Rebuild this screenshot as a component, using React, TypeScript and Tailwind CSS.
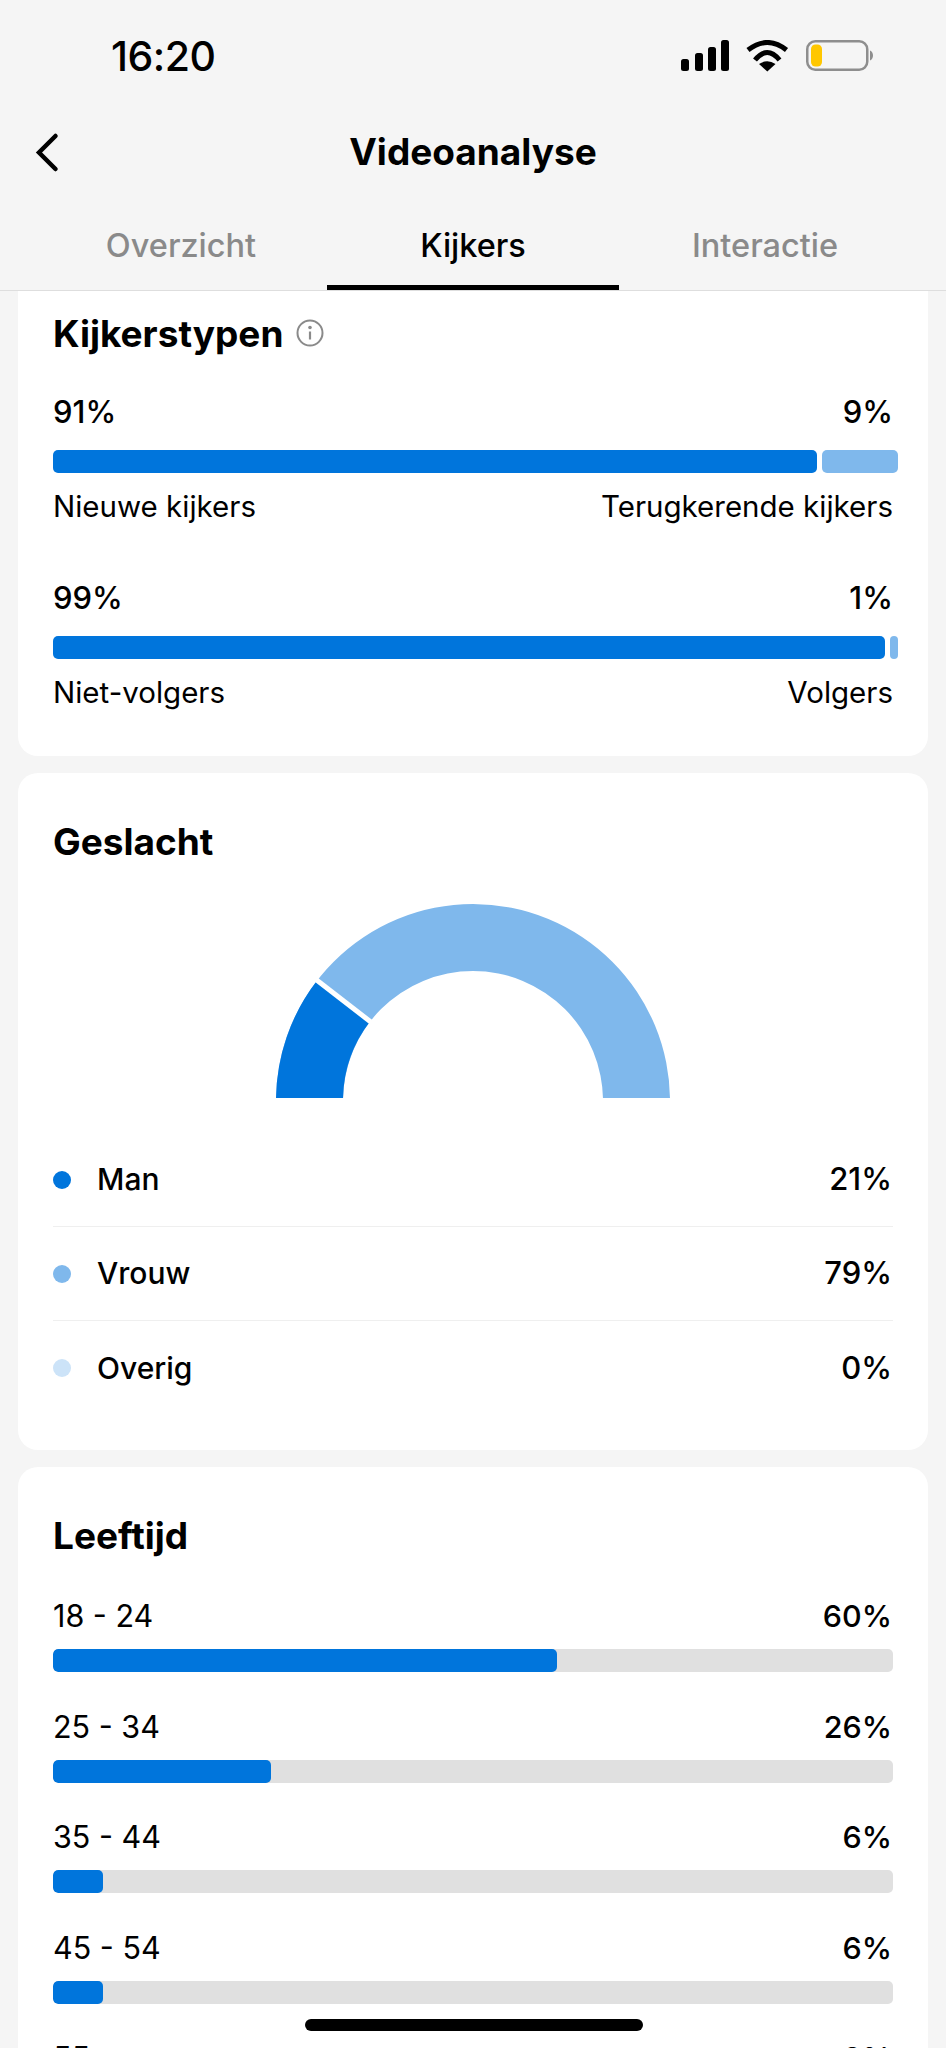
const sans = "font-['Inter',sans-serif]"

const typen = [
  { left: '91%', right: '9%', leftLabel: 'Nieuwe kijkers', rightLabel: 'Terugkerende kijkers', w: 'w-[764px]' },
  { left: '99%', right: '1%', leftLabel: 'Niet-volgers', rightLabel: 'Volgers', w: 'w-[832px]' },
]

const geslacht = [
  { label: 'Man', pct: '21%', dot: 'bg-[#0075DC]' },
  { label: 'Vrouw', pct: '79%', dot: 'bg-[#7FB8EC]' },
  { label: 'Overig', pct: '0%', dot: 'bg-[#CCE3F8]' },
]

const leeftijd = [
  { label: '18 - 24', pct: 60 },
  { label: '25 - 34', pct: 26 },
  { label: '35 - 44', pct: 6 },
  { label: '45 - 54', pct: 6 },
  { label: '55+', pct: 2 },
]

function StatusBar() {
  return (
    <div className="flex items-center justify-between h-[112px] pl-[111px] pr-[71px]">
      <span className="text-[41px] font-medium leading-none text-black tracking-[-0.5px]">16:20</span>
      <svg width="194" height="32" viewBox="0 0 194 32" fill="none">
        <rect x="0" y="19" width="8" height="12" rx="2.500" fill="#000" />
        <rect x="14" y="13" width="8" height="18" rx="2.500" fill="#000" />
        <rect x="27" y="7" width="8" height="24" rx="2.500" fill="#000" />
        <rect x="40" y="0" width="8" height="31" rx="2.500" fill="#000" />
        <path d="M67 10 Q86.300 -5 105.500 10" stroke="#000" strokeWidth="5" />
        <path d="M74 20 Q86.300 5 98.500 20" stroke="#000" strokeWidth="5" />
        <path d="M78 24 Q86.300 18.500 94.500 24 L86.300 31.500 Z" fill="#000" />
        <rect x="126.250" y="1.250" width="60" height="28.500" rx="8" stroke="#8E8E8E" strokeWidth="2.500" />
        <rect x="130" y="4.500" width="11" height="22" rx="4.500" fill="#FFC700" />
        <path d="M189 10.500 C193 12 193 19 189 20.500 Z" fill="#8E8E8E" />
      </svg>
    </div>
  )
}

function Tab({ label, active }: { label: string; active?: boolean }) {
  return (
    <div
      className={`relative flex-1 flex items-center justify-center h-[78px] pb-[10px] text-[32.5px] font-medium ${
        active ? 'text-black' : 'text-[#8A8A8A]'
      }`}
    >
      {label}
      {active && <div className="absolute left-0 right-0 bottom-0 h-[5px] bg-black" />}
    </div>
  )
}

function Gauge() {
  return (
    <svg width="394" height="195" viewBox="0 0 394 195" className="block">
      <path d="M0 198 A197 197 0 0 1 394 198 L327 198 A130 130 0 0 0 67 198 Z" fill="#7FB8EC" />
      <path d="M0 198 A197 197 0 0 1 41.300 77.300 L94.200 118.300 A130 130 0 0 0 67 198 Z" fill="#0075DC" />
      <line x1="38" y1="75" x2="100" y2="123" stroke="#fff" strokeWidth="5" />
    </svg>
  )
}

export default function App() {
  return (
    <div className={`relative h-[2048px] overflow-hidden bg-[#F5F5F5] text-black ${sans}`}>
      <header className="border-b border-[#DEDEDE]">
        <StatusBar />
        <div className="relative flex items-center justify-center h-[80px] pb-[2px]">
          <svg width="26" height="42" viewBox="0 0 26 42" fill="none" className="absolute left-[35px] top-[20px]">
            <path d="M20.500 4 L4 20.500 L20.500 37" stroke="#000" strokeWidth="4.500" strokeLinecap="round" />
          </svg>
          <h1 className="text-[37px] font-bold leading-none">Videoanalyse</h1>
        </div>
        <div className="flex pt-[20px] px-[35px]">
          <Tab label="Overzicht" />
          <Tab label="Kijkers" active />
          <Tab label="Interactie" />
        </div>
      </header>

      <main className="flex flex-col gap-[17px] px-[18px]">
        <section className="bg-white rounded-b-[20px] h-[465px] px-[35px] pt-[22px]">
          <div className="flex items-center gap-[13px] h-[40px]">
            <h2 className="text-[37px] font-bold leading-none">Kijkerstypen</h2>
            <svg width="28" height="28" viewBox="0 0 28 28" fill="none">
              <circle cx="14" cy="14" r="12.500" stroke="#8A8A8A" strokeWidth="2" />
              <circle cx="14" cy="8.500" r="1.800" fill="#8A8A8A" />
              <path d="M14 12.500 V20.500" stroke="#8A8A8A" strokeWidth="2.200" />
            </svg>
          </div>
          <div className="flex flex-col gap-[48px] mt-[37px]">
            {typen.map((t) => (
              <div key={t.left}>
                <div className="flex justify-between text-[31px] font-medium leading-[44px]">
                  <span>{t.left}</span>
                  <span>{t.right}</span>
                </div>
                <div className="flex gap-[5px] h-[23px] mt-[16px] -mr-[5px]">
                  <div className={`${t.w} shrink-0 rounded-[5px] bg-[#0075DC]`} />
                  <div className="flex-1 rounded-[5px] bg-[#7FB8EC]" />
                </div>
                <div className="flex justify-between text-[29.5px] leading-[44px] mt-[11px]">
                  <span>{t.leftLabel}</span>
                  <span>{t.rightLabel}</span>
                </div>
              </div>
            ))}
          </div>
        </section>

        <section className="bg-white rounded-[20px] h-[677px] px-[35px] pt-[47px]">
          <h2 className="text-[37px] font-bold leading-[44px]">Geslacht</h2>
          <div className="flex justify-center mt-[39px]">
            <Gauge />
          </div>
          <div className="mt-[35px]">
            {geslacht.map((g, i) => (
              <div
                key={g.label}
                className={`flex items-center h-[94px] ${i < 2 ? 'border-b border-[#EFEFEF]' : ''}`}
              >
                <span className={`w-[18px] h-[18px] rounded-full ${g.dot}`} />
                <span className="ml-[26px] text-[30px] font-medium">{g.label}</span>
                <span className="ml-auto pr-[1px] text-[31px] font-medium">{g.pct}</span>
              </div>
            ))}
          </div>
        </section>

        <section className="bg-white rounded-[20px] px-[35px] pt-[47px]">
          <h2 className="text-[37px] font-bold leading-[44px]">Leeftijd</h2>
          <div className="flex flex-col gap-[32.5px] mt-[36px]">
            {leeftijd.map((a) => (
              <div key={a.label}>
                <div className="flex justify-between text-[30.5px] leading-[44px]">
                  <span>{a.label}</span>
                  <span className="font-medium pr-[1px]">{a.pct}%</span>
                </div>
                <div className="h-[23px] mt-[11px] rounded-[5px] bg-[#E0E0E0] overflow-hidden">
                  <div className="h-full rounded-[5px] bg-[#0075DC]" style={{ width: `${a.pct}%` }} />
                </div>
              </div>
            ))}
          </div>
        </section>
      </main>

      <div className="absolute left-[305px] top-[2019px] w-[338px] h-[12px] rounded-full bg-black" />
    </div>
  )
}
